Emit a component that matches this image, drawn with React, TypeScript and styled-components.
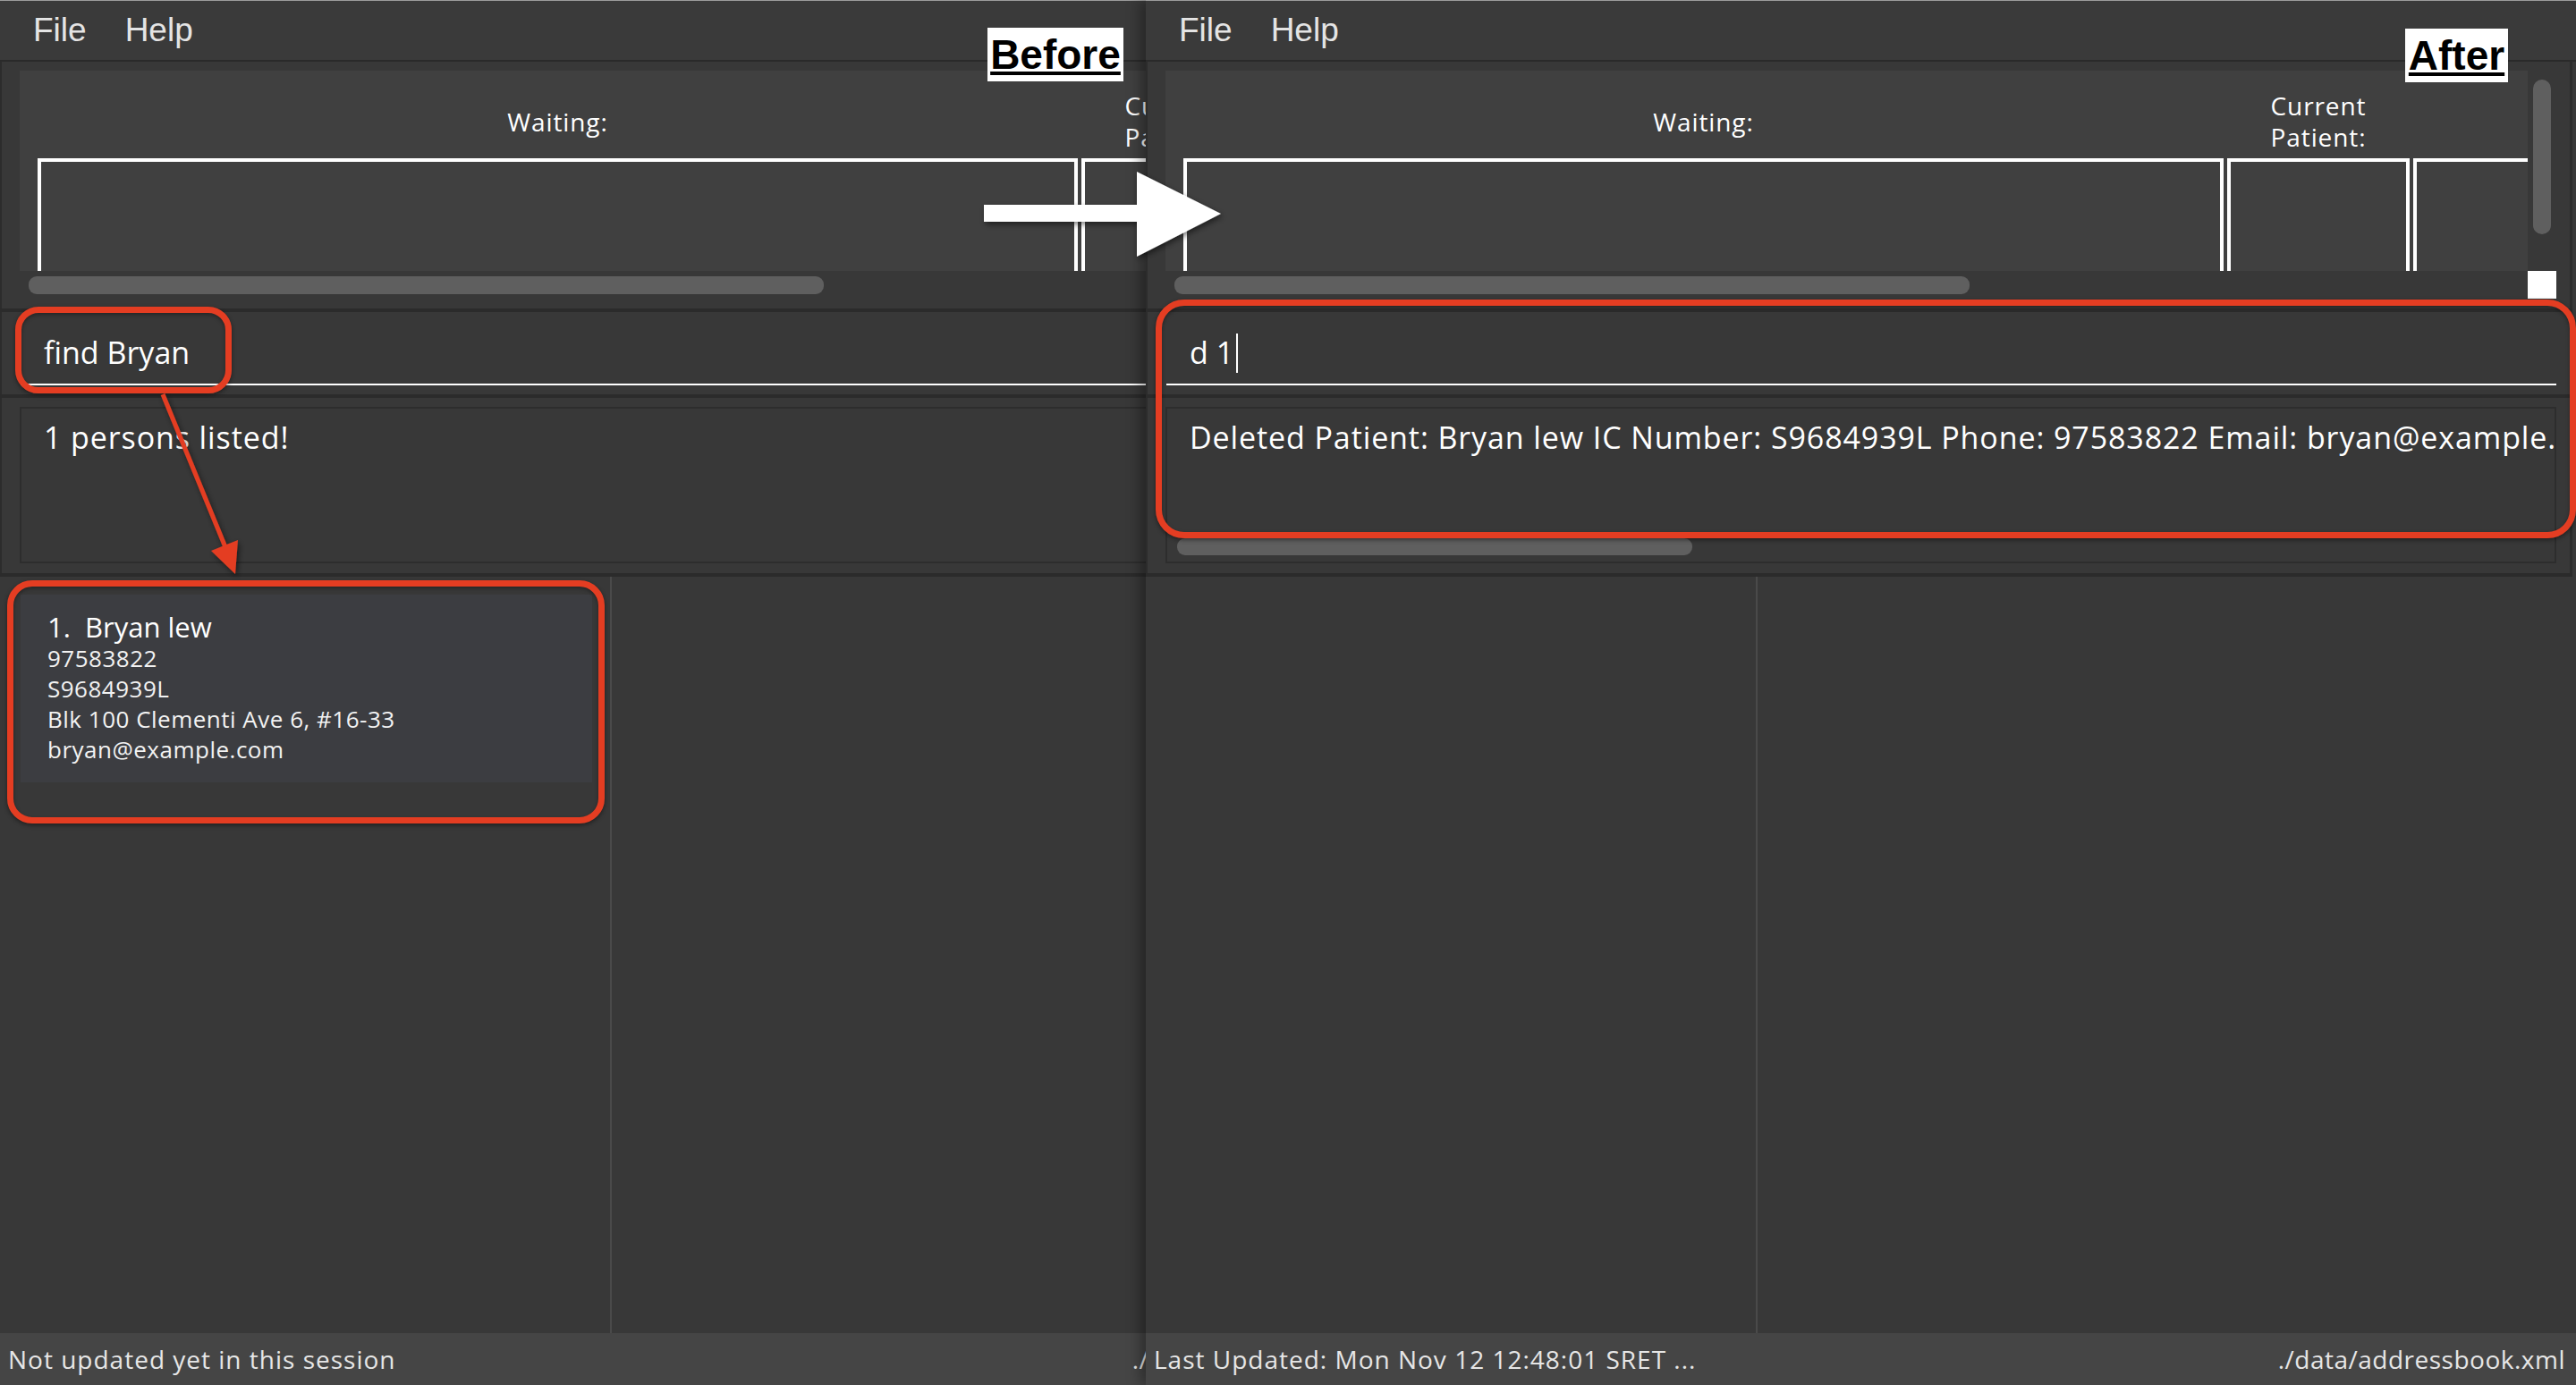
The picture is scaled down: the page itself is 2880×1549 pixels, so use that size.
import React from "react";
import styled, { createGlobalStyle } from "styled-components";

const GlobalStyle = createGlobalStyle`
  html, body { margin: 0; padding: 0; background: #383838; overflow: hidden; }
  #root { width: 2880px; height: 1549px; }
  * { box-sizing: border-box; }
`;

const Page = styled.div`
  position: relative;
  width: 2880px;
  height: 1549px;
  display: flex;
  overflow: hidden;
  background: #383838;
`;

const LeftClip = styled.div`
  flex: none;
  width: 1281px;
  height: 100%;
  overflow: hidden;
`;

const RightSlot = styled.div`
  flex: none;
  width: 1599px;
  height: 100%;
  position: relative;
  z-index: 1;
  box-shadow: -6px 0 14px rgba(0, 0, 0, 0.35);
`;

const WindowFrame = styled.div`
  width: 1599px;
  height: 1549px;
  display: flex;
  flex-direction: column;
  background: #383838;
  border-top: 1px solid #9c9c9c;
  font-family: "Open Sans", "Noto Sans", sans-serif;
  color: #ffffff;
`;

const MenuBar = styled.div`
  flex: none;
  height: 68px;
  display: flex;
  align-items: center;
  gap: 43px;
  padding-left: 37px;
  background: #3a3a3a;
  border-bottom: 2px solid #2a2a2a;
  font-family: "Liberation Sans", Arial, sans-serif;
  font-size: 37px;
  color: #e4e4e4;
`;

const MenuItem = styled.span``;

const Pane = styled.div<{ $h: number }>`
  flex: none;
  height: ${(p) => p.$h}px;
  margin-right: 4px;
  border-left: 2px solid #2c2c2c;
  border-right: 3px solid #2c2c2c;
`;

const Divider = styled.div`
  flex: none;
  height: 4px;
  margin-right: 4px;
  background: #2b2b2b;
`;

const QueuePane = styled(Pane)`
  padding: 10px 15px 11px 20px;
  display: grid;
  grid-template-columns: 1fr 32px;
  grid-template-rows: 224px 31px;
`;

const QueueContent = styled.div`
  background: #404040;
  padding-left: 20px;
  display: flex;
  gap: 4px;
  overflow: hidden;
`;

const QueueColumn = styled.div<{ $w: number }>`
  flex: none;
  width: ${(p) => p.$w}px;
  display: flex;
  flex-direction: column;
`;

const ColumnLabel = styled.div`
  flex: none;
  height: 98px;
  padding-top: 16px;
  display: flex;
  align-items: center;
  justify-content: center;
  text-align: center;
  font-size: 28px;
  line-height: 35px;
  letter-spacing: 0.9px;
  color: #ffffff;
`;

const ColumnBox = styled.div`
  flex: 1;
  border: 4px solid #ffffff;
  border-bottom: none;
`;

const VTrack = styled.div`
  padding: 10px 0 0 6px;
`;

const VThumb = styled.div`
  width: 20px;
  height: 173px;
  border-radius: 10px;
  background: #5f5f5f;
`;

const HTrack = styled.div`
  padding: 6px 0 0 10px;
`;

const HThumb = styled.div<{ $w: number }>`
  width: ${(p) => p.$w}px;
  height: 20px;
  border-radius: 9px;
  background: #5f5f5f;
`;

const Corner = styled.div`
  background: #ffffff;
`;

const CommandPane = styled(Pane)`
  padding: 22px 15px 10px 21px;
`;

const CommandField = styled.div`
  height: 60px;
  padding: 0 0 12px 26px;
  border-bottom: 2px solid #ffffff;
  font-size: 34px;
  line-height: 46px;
  white-space: nowrap;
  color: #ffffff;
  display: flex;
  align-items: flex-start;
`;

const Caret = styled.span`
  display: inline-block;
  width: 2px;
  height: 44px;
  margin: 2px 0 0 3px;
  background: #ffffff;
`;

const ResultPane = styled(Pane)`
  padding: 10px 15px 11px 20px;
`;

const ResultBox = styled.div`
  height: 100%;
  border: 2px solid #2d2d2d;
  padding: 9px 0 7px 25px;
  display: flex;
  flex-direction: column;
  overflow: hidden;
`;

const ResultText = styled.div`
  font-size: 34px;
  line-height: 46px;
  letter-spacing: 0.9px;
  white-space: nowrap;
  color: #ffffff;
`;

const ResultScroll = styled.div<{ $w: number }>`
  margin-top: auto;
  margin-left: -14px;
  width: ${(p) => p.$w}px;
  height: 19px;
  border-radius: 9px;
  background: #5f5f5f;
`;

const ListArea = styled.div`
  flex: 1;
  display: flex;
  min-height: 0;
`;

const PersonList = styled.div`
  flex: none;
  width: 684px;
  border-right: 2px solid #4a4a4a;
  padding: 20px 20px 0 23px;
`;

const DetailPanel = styled.div`
  flex: 1;
  background: #383838;
`;

const Card = styled.div`
  background: #3c3d41;
  padding: 19px 0 20px 30px;
`;

const CardName = styled.div`
  font-size: 31px;
  line-height: 35px;
  color: #ffffff;
  white-space: pre;
`;

const CardLine = styled.div`
  font-size: 26px;
  line-height: 34px;
  letter-spacing: 0.5px;
  color: #f2f2f2;
`;

const StatusBar = styled.div`
  flex: none;
  height: 58px;
  display: flex;
  align-items: center;
  justify-content: space-between;
  padding: 0 12px 0 9px;
  background: #454545;
  font-size: 28px;
  letter-spacing: 1px;
  color: #e6e6e6;
  white-space: nowrap;
`;

const StatusPath = styled.span`
  letter-spacing: 0.5px;
`;

const RedFrame = styled.div<{ $x: number; $y: number; $w: number; $h: number; $r: number }>`
  position: absolute;
  left: ${(p) => p.$x}px;
  top: ${(p) => p.$y}px;
  width: ${(p) => p.$w}px;
  height: ${(p) => p.$h}px;
  border: 7px solid #e43d22;
  border-radius: ${(p) => p.$r}px;
  box-shadow: 0 2px 5px rgba(0, 0, 0, 0.45), inset 0 2px 4px rgba(0, 0, 0, 0.35);
  pointer-events: none;
  z-index: 5;
`;

const Tag = styled.div<{ $x: number; $y: number; $w: number }>`
  position: absolute;
  left: ${(p) => p.$x}px;
  top: ${(p) => p.$y}px;
  width: ${(p) => p.$w}px;
  height: 60px;
  background: #ffffff;
  color: #000000;
  display: flex;
  align-items: center;
  justify-content: center;
  font-family: "Liberation Sans", Arial, sans-serif;
  font-weight: bold;
  font-size: 46px;
  text-decoration: underline;
  text-decoration-thickness: 4px;
  text-underline-offset: 3px;
  z-index: 5;
`;

const Overlay = styled.svg`
  position: absolute;
  left: 0;
  top: 0;
  pointer-events: none;
  z-index: 6;
  overflow: visible;
`;

type Person = { name: string; phone: string; ic: string; address: string; email: string };

type WindowProps = {
  command: string;
  caret?: boolean;
  result: string;
  resultScroll?: number;
  persons: Person[];
  status: string;
};

const AppWindow: React.FC<WindowProps> = ({ command, caret, result, resultScroll, persons, status }) => (
  <WindowFrame>
    <MenuBar>
      <MenuItem>File</MenuItem>
      <MenuItem>Help</MenuItem>
    </MenuBar>
    <QueuePane $h={276}>
      <QueueContent>
        <QueueColumn $w={1163}>
          <ColumnLabel>Waiting:</ColumnLabel>
          <ColumnBox />
        </QueueColumn>
        <QueueColumn $w={204}>
          <ColumnLabel>
            Current
            <br />
            Patient:
          </ColumnLabel>
          <ColumnBox />
        </QueueColumn>
        <QueueColumn $w={204}>
          <ColumnLabel />
          <ColumnBox />
        </QueueColumn>
      </QueueContent>
      <VTrack>
        <VThumb />
      </VTrack>
      <HTrack>
        <HThumb $w={889} />
      </HTrack>
      <Corner />
    </QueuePane>
    <Divider />
    <CommandPane $h={92}>
      <CommandField>
        {command}
        {caret && <Caret />}
      </CommandField>
    </CommandPane>
    <Divider />
    <ResultPane $h={196}>
      <ResultBox>
        <ResultText>{result}</ResultText>
        {resultScroll ? <ResultScroll $w={resultScroll} /> : null}
      </ResultBox>
    </ResultPane>
    <Divider />
    <ListArea>
      <PersonList>
        {persons.map((p, i) => (
          <Card key={p.ic}>
            <CardName>{`${i + 1}.  ${p.name}`}</CardName>
            <CardLine>{p.phone}</CardLine>
            <CardLine>{p.ic}</CardLine>
            <CardLine>{p.address}</CardLine>
            <CardLine>{p.email}</CardLine>
          </Card>
        ))}
      </PersonList>
      <DetailPanel />
    </ListArea>
    <StatusBar>
      <span>{status}</span>
      <StatusPath>./data/addressbook.xml</StatusPath>
    </StatusBar>
  </WindowFrame>
);

const bryan: Person = {
  name: "Bryan lew",
  phone: "97583822",
  ic: "S9684939L",
  address: "Blk 100 Clementi Ave 6, #16-33",
  email: "bryan@example.com",
};

export default function App() {
  return (
    <>
      <GlobalStyle />
      <Page>
        <LeftClip>
          <AppWindow
            command="find Bryan"
            result="1 persons listed!"
            persons={[bryan]}
            status="Not updated yet in this session"
          />
        </LeftClip>
        <RightSlot>
          <AppWindow
            command="d 1"
            caret
            result="Deleted Patient: Bryan lew IC Number: S9684939L Phone: 97583822 Email: bryan@example.com"
            resultScroll={576}
            persons={[]}
            status="Last Updated: Mon Nov 12 12:48:01 SRET ..."
          />
        </RightSlot>

        <Tag $x={1104} $y={31} $w={152}>Before</Tag>
        <Tag $x={2689} $y={32} $w={115}>After</Tag>

        <RedFrame $x={17} $y={343} $w={242} $h={97} $r={26} />
        <RedFrame $x={8} $y={649} $w={668} $h={272} $r={28} />
        <RedFrame $x={1292} $y={335} $w={1588} $h={267} $r={32} />

        <Overlay width={2880} height={1549} viewBox="0 0 2880 1549">
          <defs>
            <filter id="shadow" x="-20%" y="-20%" width="140%" height="160%">
              <feDropShadow dx="2" dy="3" stdDeviation="3" floodColor="#000" floodOpacity="0.5" />
            </filter>
          </defs>
          <g filter="url(#shadow)">
            <line x1={182} y1={441} x2={252} y2={612} stroke="#e43d22" strokeWidth={5} />
            <polygon points="263,642 236,616 266,604" fill="#e43d22" />
          </g>
          <polygon
            points="1100,229 1271,229 1271,192 1365,239 1271,287 1271,248 1100,248"
            fill="#ffffff"
            filter="url(#shadow)"
          />
        </Overlay>
      </Page>
    </>
  );
}
